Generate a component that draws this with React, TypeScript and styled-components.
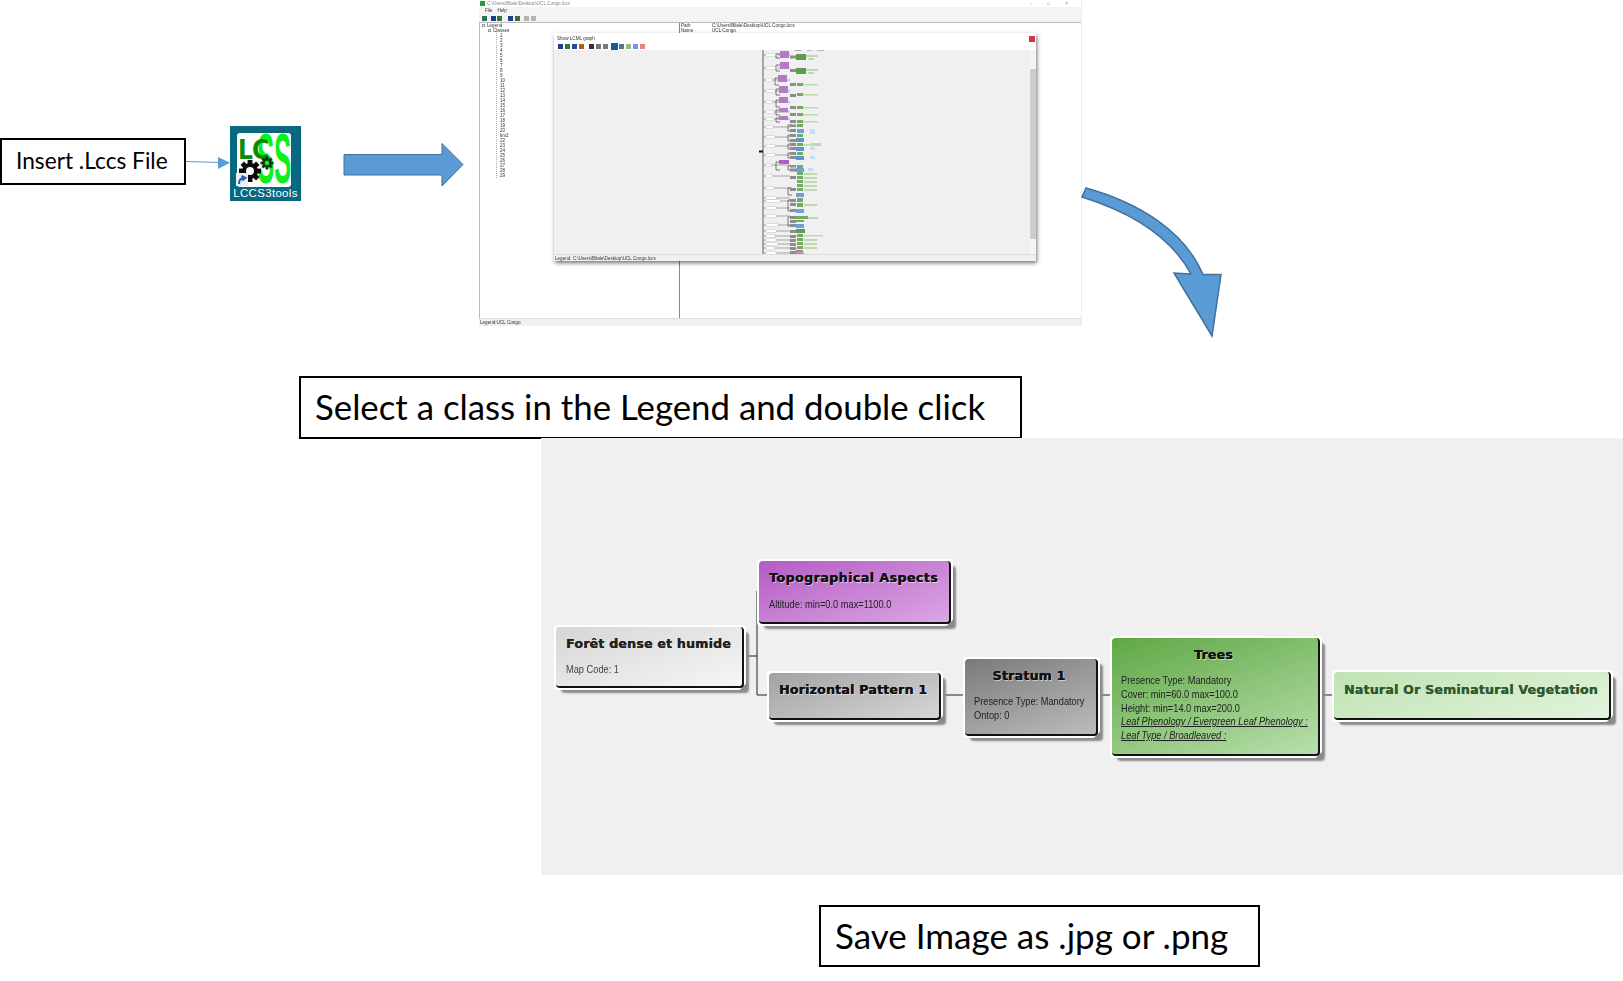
import React from "react";
import styled, { createGlobalStyle } from "styled-components";

const Global = createGlobalStyle`
  html, body { margin: 0; padding: 0; background: #fff; }
  #root { width: 1623px; height: 981px; overflow: hidden; }
`;

const Slide = styled.div`
  position: relative;
  width: 1623px;
  height: 981px;
  background: #fff;
  overflow: hidden;
  font-family: "Lato", "Liberation Sans", sans-serif;
`;

const Callout = styled.div<{ $x: number; $y: number; $w: number; $h: number; $size: number }>`
  position: absolute;
  left: ${(p) => p.$x}px;
  top: ${(p) => p.$y}px;
  width: ${(p) => p.$w}px;
  height: ${(p) => p.$h}px;
  box-sizing: border-box;
  border: 2px solid #000;
  display: flex;
  align-items: center;
  padding: 0 0 3px 14px;
  background: #fff;
  color: #000;
  font-size: ${(p) => p.$size}px;
  white-space: nowrap;
`;

const Drawing = styled.svg`
  position: absolute;
  left: 0;
  top: 0;
  pointer-events: none;
`;

const AppIcon = styled.svg`
  position: absolute;
  left: 230px;
  top: 126px;
`;

/* ---------- miniature application window ---------- */
const WindowShot = styled.div`
  position: absolute;
  left: 479px;
  top: 0;
  width: 603px;
  height: 326px;
  display: flex;
  flex-direction: column;
  background: #fff;
  font-family: "Liberation Sans", sans-serif;
  font-size: 4.6px;
  color: #333;
  filter: blur(0.4px);
  border-right: 1px solid #eee;
  box-sizing: border-box;
`;

const TitleBar = styled.div`
  height: 7px;
  display: flex;
  align-items: center;
  gap: 2px;
  padding-left: 1px;
  color: #888;
`;

const AppBadge = styled.span`
  width: 5px;
  height: 5px;
  background: #2a9a2a;
`;

const WinButtons = styled.span`
  margin-left: auto;
  margin-right: 6px;
  color: #888;
  letter-spacing: 7px;
`;

const MenuBar = styled.div`
  height: 7px;
  padding-left: 6px;
  display: flex;
  align-items: center;
  gap: 5px;
  background: #f4f4f4;
`;

const ToolBar = styled.div<{ $h: number; $pad: number }>`
  height: ${(p) => p.$h}px;
  display: flex;
  align-items: center;
  padding-left: ${(p) => p.$pad}px;
  box-sizing: border-box;
`;

const MainToolBar = styled(ToolBar)`
  background: #f4f4f4;
  border-bottom: 1px solid #bbb;
`;

const Tool = styled.span<{ $c: string; $w?: number; $gap: number }>`
  width: ${(p) => p.$w ?? 5}px;
  height: ${(p) => p.$w ?? 5}px;
  margin-left: ${(p) => p.$gap}px;
  background: ${(p) => p.$c};
  flex: none;
`;

const WinBody = styled.div`
  flex: 1;
  display: flex;
  min-height: 0;
  border-left: 1px solid #bbb;
`;

const TreePane = styled.div`
  width: 200px;
  flex: none;
  border-right: 1.5px solid #888;
  padding: 0 0 0 2px;
  box-sizing: border-box;
`;

const TreeRow = styled.div<{ $indent: number }>`
  height: 5px;
  line-height: 5px;
  padding-left: ${(p) => p.$indent}px;
  white-space: nowrap;
  display: flex;
  align-items: center;
`;

const TreeToggle = styled.span`
  width: 3px;
  height: 3px;
  margin-right: 2px;
  box-sizing: border-box;
  border: 0.5px solid #999;
  flex: none;
`;

const TreeList = styled.div`
  margin-left: 14px;
  border-left: 1px dotted #aaa;
  padding-left: 3px;
`;

const PropsPane = styled.div`
  flex: 1;
  display: grid;
  grid-template-columns: 31px 1fr;
  grid-auto-rows: 4.5px;
  align-content: start;
  padding: 1px 0 0 1px;
  line-height: 4.5px;
`;

const StatusBar = styled.div<{ $h: number }>`
  height: ${(p) => p.$h}px;
  flex: none;
  display: flex;
  align-items: center;
  padding-left: 1px;
  background: #f0f0f0;
  border-top: 1px solid #ddd;
  box-sizing: border-box;
`;

const Dialog = styled.div`
  position: absolute;
  left: 75px;
  top: 33px;
  width: 482px;
  height: 228px;
  display: flex;
  flex-direction: column;
  background: #fff;
  box-shadow: 1px 2px 4px rgba(0, 0, 0, 0.55);
`;

const DialogTitle = styled.div`
  height: 9px;
  display: flex;
  align-items: center;
  padding: 2px 1px 0 3px;
  box-sizing: border-box;
`;

const CloseBox = styled.span`
  margin-left: auto;
  width: 6px;
  height: 6px;
  background: #d0363c;
`;

const DialogMain = styled.div`
  flex: 1;
  display: flex;
  min-height: 0;
  background: #f0f0f0;
`;

const GraphArea = styled.div`
  flex: 1;
  padding-left: 201px;
  overflow: hidden;
`;

const ScrollBar = styled.div`
  width: 6px;
  flex: none;
  display: flex;
  flex-direction: column;
  align-items: center;
  padding: 19px 0 15px;
  background: #f4f4f4;
  box-sizing: border-box;
`;

const ScrollThumb = styled.div`
  width: 100%;
  flex: 1;
  background: #cdcdcd;
`;

/* ---------- main graph ---------- */
const GraphPanel = styled.div`
  position: absolute;
  left: 541px;
  top: 438px;
  width: 1082px;
  height: 437px;
  background: #f0f0f0;
`;

const Node = styled.div<{ $x: number; $y: number; $w: number; $h: number; $from: string; $to: string; $center?: boolean; $pad?: number }>`
  position: absolute;
  left: ${(p) => p.$x - 541}px;
  top: ${(p) => p.$y - 438}px;
  width: ${(p) => p.$w}px;
  height: ${(p) => p.$h}px;
  box-sizing: border-box;
  padding: ${(p) => p.$pad ?? 9}px ${(p) => (p.$center ? 12 : 9)}px 0 ${(p) => (p.$center ? 9 : 10)}px;
  border-radius: 4px;
  background: linear-gradient(160deg, ${(p) => p.$from}, ${(p) => p.$to});
  border-right: 2px solid #111;
  border-bottom: 2px solid #111;
  box-shadow: -2px -2px 0 #fff, 2px -2px 0 #fff, -2px 2px 0 #fff, 5px 5px 2px #8a8a8a;
  text-align: ${(p) => (p.$center ? "center" : "left")};
  white-space: nowrap;
`;

const NodeTitle = styled.div<{ $color?: string; $glow?: boolean; $track?: number }>`
  font-family: "DejaVu Sans", sans-serif;
  font-weight: 700;
  font-size: 12.6px;
  line-height: 16px;
  letter-spacing: ${(p) => p.$track ?? 0.2}px;
  color: ${(p) => p.$color ?? "#111"};
  text-shadow: ${(p) => (p.$glow ? "0.3px 0 0 #111, 1px 1px 0 rgba(255,255,255,0.55)" : "0.3px 0 0 currentColor")};
`;

const NodeBody = styled.div<{ $top: number; $color?: string }>`
  margin-top: ${(p) => p.$top}px;
  text-align: left;
  font-family: "Liberation Sans", sans-serif;
  font-size: 11.5px;
  line-height: 13.75px;
  color: ${(p) => p.$color ?? "#222"};
  transform: scaleX(0.805);
  transform-origin: left center;
`;

const Linked = styled.div`
  text-decoration: underline;
  font-style: italic;
`;

/* ---------- data ---------- */
const PURPLE = "#b878c8";
const GRAY = "#8d8d8d";
const GREEN = "#74ab62";
const BLUE = "#6aa3dc";
const PALE = "#bcd9b0";
const SKY = "#c4dcf4";

type Box = [number, number, number, number, string];

const miniBoxes: Box[] = [
  [795, 50, 6, 1, "#aaa"], [807, 50, 5, 1, "#bbb"], [817, 50, 7, 1, "#bbb"],
  [780, 51, 9, 7, PURPLE], [790, 55.5, 6, 3, GRAY], [796, 54, 10, 6, "#5f9a50"], [806, 55, 12, 2, PALE], [808, 58, 6, 2, PALE],
  [780, 62, 9, 7, PURPLE], [790, 69, 6, 3, GRAY], [796, 68, 10, 6, "#5f9a50"], [806, 69, 12, 2, PALE], [808, 72, 6, 2, PALE],
  [778, 75, 9, 7, PURPLE], [790, 83, 6, 3, GRAY], [797, 83, 6, 3, GREEN], [803, 84, 15, 1.5, PALE],
  [779, 86, 9, 7, PURPLE], [790, 94, 6, 3, GRAY], [797, 93, 6, 3, GREEN], [803, 94, 15, 1.5, PALE],
  [779, 97, 9, 6, PURPLE], [790, 106, 6, 3, GRAY], [797, 106, 6, 3, GREEN], [803, 107, 15, 1.5, PALE],
  [779, 108, 9, 4, PURPLE], [790, 113, 6, 3, GRAY], [797, 113, 6, 3, GREEN], [803, 114, 15, 1.5, PALE],
  [779, 116, 9, 4, PURPLE], [790, 120, 6, 3, GRAY], [797, 120, 6, 3, GREEN], [803, 121, 15, 1.5, PALE],
  [790, 124.5, 6, 2.5, GRAY], [797, 124, 6, 3, GREEN],
  [790, 129, 6, 3, GRAY], [797, 129, 7, 4, BLUE], [810, 129, 5, 5, SKY],
  [790, 134, 6, 3, GRAY], [797, 134, 6, 3, GREEN],
  [790, 139, 6, 3, GRAY], [796, 138, 8, 4, "#5c97d2"],
  [790, 143, 6, 3, GRAY], [797, 143, 6, 3, GREEN], [803, 144, 8, 1.5, PALE], [811, 143, 10, 3, PALE],
  [790, 147, 6, 3, GRAY], [796, 147, 8, 4, "#5c97d2"], [810, 147, 5, 3, SKY],
  [790, 152, 6, 3, GRAY], [797, 152, 6, 3, GREEN],
  [790, 156, 6, 3, GRAY], [796, 156, 8, 4, "#5c97d2"], [810, 156, 5, 3, SKY],
  [779, 160, 10, 4, "#b45cc4"],
  [790, 165, 6, 2.5, GRAY], [797, 165, 6, 3, GREEN],
  [790, 168.5, 6, 3, GRAY], [796, 168, 8, 4, BLUE], [808, 168, 5, 3, SKY],
  [797, 172, 6, 3, GREEN], [797, 176, 6, 3, GREEN], [797, 180, 6, 3, GREEN], [797, 184, 6, 3, GREEN], [797, 188, 6, 3, GREEN],
  [804, 173, 13, 2, PALE], [804, 177, 13, 2, PALE], [804, 181, 13, 2, PALE], [804, 185, 13, 2, PALE], [804, 189, 13, 2, PALE],
  [790, 176, 6, 3, GRAY], [790, 188, 6, 3, GRAY],
  [796, 193, 8, 4, BLUE],
  [790, 199, 6, 3, GRAY], [790, 203, 6, 3, GRAY], [797, 198, 6, 4, GREEN], [797, 203, 6, 4, GREEN], [804, 204, 13, 2, PALE],
  [790, 209, 6, 3, GRAY], [796, 209, 8, 4, BLUE],
  [790, 216, 6, 3, GRAY], [790, 220, 6, 3, GRAY], [796, 216, 12, 3, GREEN], [796, 220, 8, 2, GREEN], [808, 217, 10, 2, PALE],
  [790, 224, 6, 3, GRAY], [796, 224, 8, 4, BLUE],
  [790, 230, 6, 3, GRAY], [796, 229, 9, 4, "#5f9a50"],
  [790, 235, 6, 3, GRAY], [790, 239, 6, 3, GRAY], [790, 243, 6, 3, GRAY], [790, 247, 6, 3, GRAY],
  [797, 234, 6, 3, GREEN], [797, 238, 6, 3, GREEN], [797, 242, 6, 3, GREEN], [797, 246, 6, 3, GREEN],
  [803, 235, 20, 1.5, PALE], [804, 239, 13, 2, PALE], [804, 243, 13, 2, PALE], [804, 247, 13, 2, PALE],
  [790, 251, 6, 3, GRAY], [796, 250, 7, 2.5, "#c47a72"], [796, 252.5, 8, 2.5, BLUE],
];

const roots: [number, number][] = [
  [55, 12], [68, 12], [80, 6], [91, 9], [102, 6], [112, 8], [119, 8], [127, 7], [137, 9], [146, 9], [155, 9],
  [165, 5], [176, 6], [188, 8], [198, 10], [201, 14], [208, 10], [216, 10], [225, 12], [231, 10], [236, 9], [240, 10], [244, 12], [248, 9], [253, 10],
];

const brackets: [number, number, number][] = [
  [776, 54, 58], [776, 65, 71], [775, 78, 85], [776, 89, 95], [776, 100, 107], [776, 110, 115], [776, 118, 122],
  [788, 125, 131], [788, 135, 141], [788, 144, 149], [788, 153, 158], [776, 162, 170], [788, 166, 170],
  [788, 188, 195], [788, 200, 211], [788, 217, 226],
];

const treeRows = Array.from({ length: 29 }, (_, i) => (i === 20 ? "km2" : String(i + 1)));

const MiniGraph = () => (
  <svg width={90} height={205} viewBox="755 50 90 205">
    <rect x={762.4} y={50} width={1.2} height={205} fill="#777" />
    <rect x={759} y={150.5} width={4} height={2} fill="#111" />
    {roots.map(([y, w]) => (
      <g key={y}>
        <path d={`M763 ${y}H790`} stroke="#888" strokeWidth={0.7} />
        <rect x={766} y={y - 1.2} width={w} height={2.4} fill="#fff" stroke="#bbb" strokeWidth={0.4} />
      </g>
    ))}
    {brackets.map(([x, a, b]) => (
      <path key={`${x}-${a}`} d={`M${x + 4} ${a}H${x}V${b}H${x + 4}`} fill="none" stroke="#555" strokeWidth={0.8} />
    ))}
    {miniBoxes.map(([x, y, w, h, c], i) => (
      <rect key={i} x={x} y={y} width={w} height={h} fill={c} />
    ))}
  </svg>
);

const Gear = ({ cx, cy, r, fill, hole }: { cx: number; cy: number; r: number; fill: string; hole: string }) => (
  <g>
    {[0, 45, 90, 135].map((a) => (
      <rect
        key={a}
        x={cx - r * 0.22}
        y={cy - r}
        width={r * 0.44}
        height={r * 2}
        fill={fill}
        transform={`rotate(${a} ${cx} ${cy})`}
      />
    ))}
    <circle cx={cx} cy={cy} r={r * 0.72} fill={fill} />
    <circle cx={cx} cy={cy} r={r * 0.36} fill={hole} />
  </g>
);

export default function App() {
  return (
    <Slide>
      <Global />

      <Callout $x={0} $y={138} $w={186} $h={47} $size={22.7}>Insert .Lccs File</Callout>

      <AppIcon width={71} height={75} viewBox="0 0 71 75">
        <rect width={71} height={75} fill="#07687f" />
        <rect x={7} y={7} width={54} height={54} rx={3} fill="#fff" />
        <text transform="translate(27 57) scale(0.72 1.95)" fontFamily="Liberation Sans" fontWeight={700} fontSize={36} fill="#0cf01c">S</text>
        <text transform="translate(44 57) scale(0.72 1.95)" fontFamily="Liberation Sans" fontWeight={700} fontSize={36} fill="#0cf01c">S</text>
        <text transform="translate(8 33) scale(0.9 1)" fontFamily="DejaVu Sans" fontWeight={700} fontSize={26} letterSpacing={-1} fill="#0a8a0a">LC</text>
        <Gear cx={20} cy={45} r={11} fill="#0b0b0b" hole="#fff" />
        <Gear cx={37} cy={37} r={6.5} fill="#10380f" hole="#0cf01c" />
        <rect x={6} y={47} width={12} height={13} fill="#e8eef6" />
        <path d="M9 58 C9 54 11 52 14 52 M11.5 50 L15.5 52 L12 54.5" fill="none" stroke="#2a5fb0" strokeWidth={2} />
        <text x={35.5} y={70.5} textAnchor="middle" fontFamily="Liberation Sans" fontSize={11.5} letterSpacing={0.3} fill="#fff">LCCS3tools</text>
      </AppIcon>

      <WindowShot>
        <TitleBar>
          <AppBadge />
          C:\Users\Bilale\Desktop\UCL Congo.lccs
          <WinButtons>- □ ×</WinButtons>
        </TitleBar>
        <MenuBar>
          <span>File</span>
          <span>Help</span>
        </MenuBar>
        <MainToolBar $h={9} $pad={3}>
          <Tool $c="#2f6f5a" $gap={0} />
          <Tool $c="#1c3f86" $gap={4} />
          <Tool $c="#2a7a3a" $gap={1} />
          <Tool $c="#27408a" $gap={6} />
          <Tool $c="#3f6a3a" $gap={2} />
          <Tool $c="#b5b5b5" $gap={4} />
          <Tool $c="#b5b5b5" $gap={2} />
        </MainToolBar>
        <WinBody>
          <TreePane>
            <TreeRow $indent={0}>
              <TreeToggle />
              Legend
            </TreeRow>
            <TreeRow $indent={6}>
              <TreeToggle />
              Classes
            </TreeRow>
            <TreeList>
              {treeRows.map((t) => (
                <TreeRow key={t} $indent={0}>{t}</TreeRow>
              ))}
            </TreeList>
          </TreePane>
          <PropsPane>
            <span>Path</span>
            <span>C:\Users\Bilale\Desktop\UCL Congo.lccs</span>
            <span>Name</span>
            <span>UCL Congo</span>
          </PropsPane>
        </WinBody>
        <StatusBar $h={8}>Legend:UCL Congo</StatusBar>

        <Dialog>
          <DialogTitle>
            Show LCML graph
            <CloseBox />
          </DialogTitle>
          <ToolBar $h={8} $pad={4}>
            <Tool $c="#1c3f86" $gap={0} />
            <Tool $c="#2a7a3a" $gap={2} />
            <Tool $c="#2a4a9a" $gap={2} />
            <Tool $c="#b85a20" $gap={2} />
            <Tool $c="#333" $gap={5} />
            <Tool $c="#777" $gap={2} />
            <Tool $c="#777" $gap={2} />
            <Tool $c="#0f5f9f" $w={7} $gap={3} />
            <Tool $c="#557788" $gap={1} />
            <Tool $c="#88c088" $gap={2} />
            <Tool $c="#8888ee" $gap={2} />
            <Tool $c="#ee8080" $gap={2} />
          </ToolBar>
          <DialogMain>
            <GraphArea>
              <MiniGraph />
            </GraphArea>
            <ScrollBar>
              <ScrollThumb />
            </ScrollBar>
          </DialogMain>
          <StatusBar $h={7}>Legend: C:\Users\Bilale\Desktop\UCL Congo.lccs</StatusBar>
        </Dialog>
      </WindowShot>

      <Drawing width={1623} height={438}>
        <path d="M186 161.5 L220 162.5" stroke="#5b9bd5" strokeWidth={1} />
        <path d="M218 157 L230 162.7 L218 169 Z" fill="#5b9bd5" />
        <path
          d="M344 154.5 H442 V143.5 L463 164.5 L442 186 V175 H344 Z"
          fill="#5b9bd5"
          stroke="#41719c"
          strokeWidth={1}
        />
        <path
          d="M1086 188 C1140 203 1185 232 1203 274.5 L1221 274.5 L1212 336 L1174 273 L1191 274 C1170 235 1130 212 1082 197 Z"
          fill="#5b9bd5"
          stroke="#41719c"
          strokeWidth={1.5}
        />
      </Drawing>

      <Callout $x={299} $y={376} $w={723} $h={63} $size={34.8}>Select a class in the Legend and double click</Callout>

      <GraphPanel>
        <Drawing width={1082} height={437}>
          <path
            d="M202 218 H216 M216 153 V257 M216 153 H228 M216 257 H228 M399 257 H424 M556 257 H571 M779 257 H793"
            fill="none"
            stroke="#222"
            strokeWidth={1}
          />
        </Drawing>

        <Node $x={556} $y={627} $w={188} $h={61} $from="#d6d6d6" $to="#f6f6f6">
          <NodeTitle $color="#222">Forêt dense et humide</NodeTitle>
          <NodeBody $top={11} $color="#444">Map Code: 1</NodeBody>
        </Node>

        <Node $x={759} $y={561} $w={192} $h={63} $from="#b45cc4" $to="#dba6e4">
          <NodeTitle $glow $track={0.45}>Topographical Aspects</NodeTitle>
          <NodeBody $top={12}>Altitude: min=0.0 max=1100.0</NodeBody>
        </Node>

        <Node $x={769} $y={673} $w={172} $h={47} $from="#a2a2a2" $to="#d6d6d6">
          <NodeTitle $glow>Horizontal Pattern 1</NodeTitle>
        </Node>

        <Node $x={965} $y={659} $w={133} $h={77} $from="#7a7a7a" $to="#bcbcbc" $center>
          <NodeTitle $glow>Stratum 1</NodeTitle>
          <NodeBody $top={11}>
            Presence Type: Mandatory
            <br />
            Ontop: 0
          </NodeBody>
        </Node>

        <Node $x={1112} $y={638} $w={208} $h={118} $from="#5fa845" $to="#b8dfac" $center>
          <NodeTitle $glow>Trees</NodeTitle>
          <NodeBody $top={11}>
            Presence Type: Mandatory
            <br />
            Cover: min=60.0 max=100.0
            <br />
            Height: min=14.0 max=200.0
            <Linked>Leaf Phenology / Evergreen Leaf Phenology :</Linked>
            <Linked>Leaf Type / Broadleaved :</Linked>
          </NodeBody>
        </Node>

        <Node $x={1334} $y={672} $w={277} $h={48} $from="#bfe3b3" $to="#e2f3dc" $pad={10}>
          <NodeTitle $color="#2f5a2f">Natural Or Seminatural Vegetation</NodeTitle>
        </Node>
      </GraphPanel>

      <Callout $x={819} $y={905} $w={441} $h={62} $size={35}>Save Image as .jpg or .png</Callout>
    </Slide>
  );
}
